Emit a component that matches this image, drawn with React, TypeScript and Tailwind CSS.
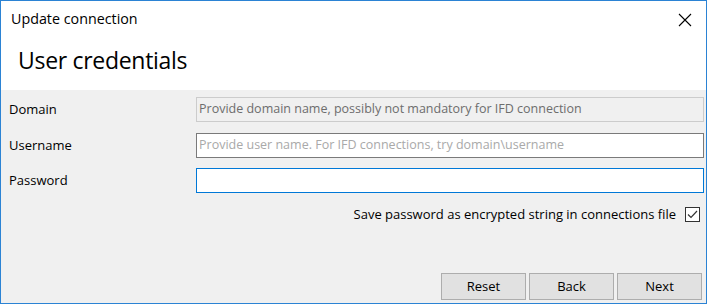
import React from "react";

export default function App() {
  const font = { fontFamily: '"Open Sans", "Noto Sans", sans-serif' };
  return (
    <div
      className="w-[707px] h-[304px] border border-[#2b83d4] bg-[#f0f0f0] flex flex-col text-[#000] overflow-hidden"
      style={font}
    >
      <div className="bg-white h-[89px] flex flex-col shrink-0">
        <div className="h-[37px] flex items-center justify-between pl-[10px] pr-[14px]">
          <span className="text-[14.3px] leading-none">Update connection</span>
          <svg width="14" height="14" viewBox="0 0 14 14" className="block">
            <path d="M1 1 L13 13 M13 1 L1 13" stroke="#000" strokeWidth="1.1" />
          </svg>
        </div>
        <div className="pl-[17px] pt-[11px]">
          <span className="text-[23px] leading-none tracking-[-0.3px]">User credentials</span>
        </div>
      </div>
      <div className="flex-1 flex flex-col pt-[7px] pl-[8px] pr-[2px]">
        <div className="flex flex-col gap-[11px]">
          <div className="flex items-center h-[25px]">
            <span className="w-[187px] text-[13px]">Domain</span>
            <div className="flex-1 h-[25px] border border-[#cccccc] bg-[#f0f0f0] flex items-center px-[2px] text-[12.5px] text-[#6d6d6d]">
              Provide domain name, possibly not mandatory for IFD connection
            </div>
          </div>
          <div className="flex items-center h-[25px]">
            <span className="w-[187px] text-[13px]">Username</span>
            <div className="flex-1 h-[25px] border border-[#7a7a7a] bg-white flex items-center px-[2px] text-[12.5px] text-[#a9a9a9]">
              {"Provide user name. For IFD connections, try domain\\username"}
            </div>
          </div>
          <div className="flex items-center h-[25px] -mt-[1px]">
            <span className="w-[187px] text-[13px]">Password</span>
            <div className="flex-1 h-[25px] border border-[#0078d7] bg-white" />
          </div>
        </div>
        <div className="flex items-center justify-end mt-[12px] pr-[4px] gap-[9px]">
          <span className="text-[13px]">Save password as encrypted string in connections file</span>
          <div className="w-[15px] h-[15px] border border-[#333333] bg-white flex items-center justify-center">
            <svg width="11" height="9" viewBox="0 0 11 9">
              <path d="M1 4.5 L4 7.5 L10 1" stroke="#333" strokeWidth="1.2" fill="none" />
            </svg>
          </div>
        </div>
        <div className="flex-1" />
        <div className="flex justify-end gap-[3px] pb-[3px] pr-[2px]">
          {["Reset", "Back", "Next"].map((t) => (
            <div
              key={t}
              className="w-[85px] h-[27px] border border-[#adadad] bg-[#e1e1e1] flex items-center justify-center text-[13px]"
            >
              {t}
            </div>
          ))}
        </div>
      </div>
    </div>
  );
}
